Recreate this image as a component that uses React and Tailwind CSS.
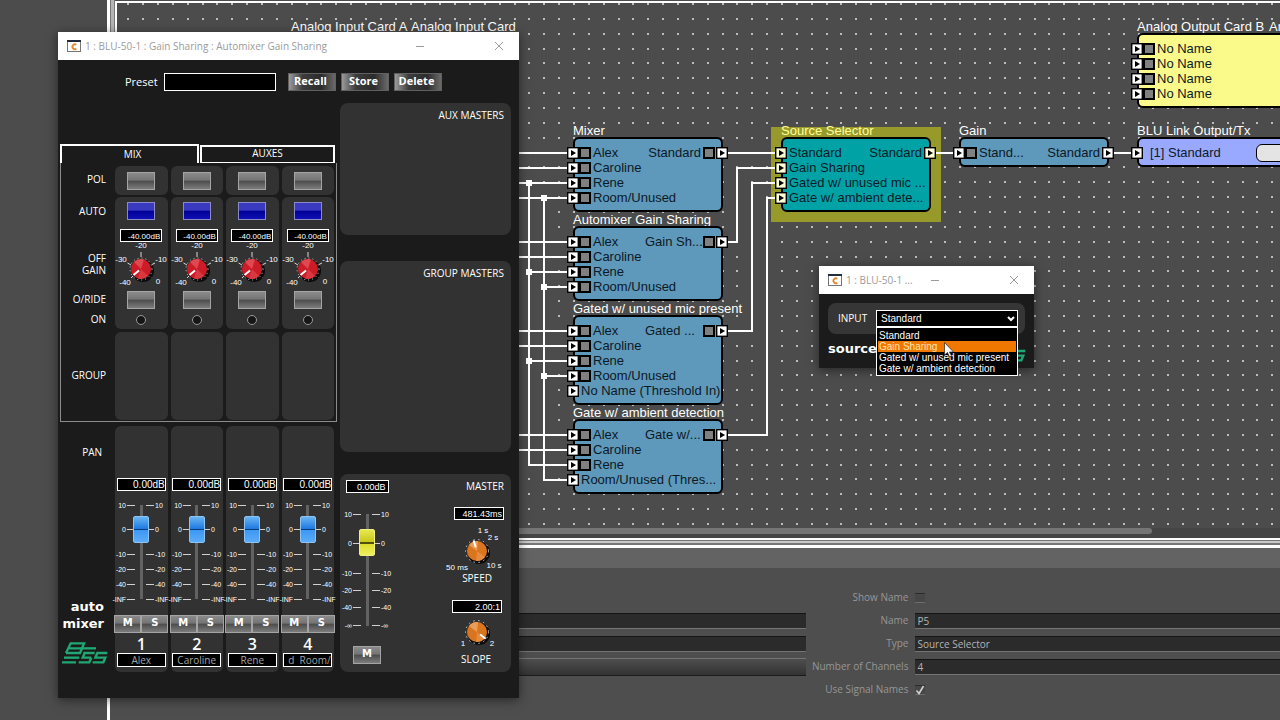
import { useState } from "react";

const channels = [
  { id: 1, name: "Alex" },
  { id: 2, name: "Caroline" },
  { id: 3, name: "Rene" },
  { id: 4, name: "d  Room/Unused" },
];

const mics = ["Alex", "Caroline", "Rene", "Room/Unused"];

// Positions are canvas coordinates of the node's title
const nodes = [
  { x: 456, y: 119, title: "Mixer", inputs: mics, output: "Standard", meters: 4, outMeter: true, color: "bg-[#5e98ba]" },
  { x: 456, y: 208, title: "Automixer Gain Sharing", inputs: mics, output: "Gain Sh...", meters: 4, outMeter: true, color: "bg-[#5e98ba]" },
  {
    x: 456,
    y: 297,
    title: "Gated w/ unused mic present",
    inputs: [...mics, "No Name (Threshold In)"],
    output: "Gated ...",
    meters: 4,
    outMeter: true,
    color: "bg-[#5e98ba]",
  },
  {
    x: 456,
    y: 401,
    title: "Gate w/ ambient detection",
    inputs: ["Alex", "Caroline", "Rene", "Room/Unused (Thres..."],
    output: "Gate w/...",
    meters: 3,
    outMeter: true,
    color: "bg-[#5e98ba]",
  },
  {
    x: 664,
    y: 119,
    title: "Source Selector",
    inputs: ["Standard", "Gain Sharing", "Gated w/ unused mic ...", "Gate w/ ambient dete..."],
    output: "Standard",
    meters: 0,
    selected: true,
    color: "bg-[#00a2a6]",
  },
  { x: 842, y: 119, title: "Gain", inputs: ["Stand..."], output: "Standard", meters: 1, color: "bg-[#5e98ba]" },
  { x: 1020, y: 119, title: "BLU Link Output/Tx", inputs: ["[1] Standard"], meters: 0, pill: true, color: "bg-[#99a9ff]" },
  {
    x: 1020,
    y: 15,
    title: "Analog Output Card B",
    inputs: ["No Name", "No Name", "No Name", "No Name"],
    meters: 4,
    color: "bg-[#fafa8b]",
  },
];

const looseTitles = [
  { x: 174, y: 15, title: "Analog Input Card A" },
  { x: 294, y: 15, title: "Analog Input Card" },
  { x: 1152, y: 15, title: "Analog Output Card C" },
];

const wires = [
  "M300 150H456", "M300 165H456", "M300 180H456", "M300 195H456",
  "M300 239H456", "M300 254H456", "M412 269H456", "M427 284H456",
  "M300 328H456", "M300 343H456", "M412 358H456", "M427 373H456",
  "M300 432H456", "M300 447H456",
  "M412 180V462H456", "M427 195V477H456",
  "M606 150H664",
  "M606 239H620V165H664",
  "M606 328H635V180H664",
  "M606 432H650V195H664",
  "M814 150H842", "M992 150H1020",
];

const junctions = [[412, 180], [427, 195], [412, 269], [427, 284], [412, 358], [427, 373]];

const gridSteps = [0, 15, 30, 45, 59, 74, 89];

const sources = ["Standard", "Gain Sharing", "Gated w/ unused mic present", "Gate w/ ambient detection"];

function Wiring() {
  return (
    <svg className="absolute inset-0 w-full h-full" aria-hidden="true">
      <defs>
        <pattern id="grid" x="40" y="0" width="104" height="104" patternUnits="userSpaceOnUse">
          {gridSteps.map((y) =>
            gridSteps.map((x) => <rect key={x + "-" + y} x={x} y={y} width="2" height="2" fill="#bcbcbc" />)
          )}
        </pattern>
      </defs>
      <rect width="100%" height="100%" fill="url(#grid)" />
      <rect x="654" y="124" width="170" height="95" fill="#98992b" />
      <g stroke="#fff" strokeWidth="2" fill="none">
        {wires.map((d) => (
          <path key={d} d={d} />
        ))}
      </g>
      {junctions.map(([x, y]) => (
        <rect key={x + "," + y} x={x - 3} y={y - 3} width="6" height="6" fill="#fff" />
      ))}
    </svg>
  );
}

function Port({ selected }) {
  return (
    <svg className="w-[12px] h-[12px] shrink-0" viewBox="0 0 12 12" aria-hidden="true">
      <rect x="0.7" y="0.7" width="10.6" height="10.6" fill={selected ? "#ffffd8" : "#fff"} stroke="#000" strokeWidth="1.4" />
      <path d="M4 3L9 6L4 9Z" fill="#000" />
    </svg>
  );
}

function Node({ node }) {
  return (
    <div className="absolute w-[150px]" style={{ left: node.x, top: node.y }}>
      <h3 className={`h-[15px] leading-[17px] whitespace-pre ${node.selected ? "text-[#ffff9a]" : "text-white"}`}>
        {node.title}
      </h3>
      <div className={`relative border-2 border-black rounded-md pt-[6px] pb-[5px] text-[#0c1a26] ${node.color}`}>
        <ul>
          {node.inputs.map((label, i) => (
            <li key={i} className="flex items-center h-[15px] -ml-[8px] -mr-[7px]">
              <Port selected={node.selected} />
              {i < node.meters && <span className="w-[12px] h-[12px] shrink-0 border-2 border-black bg-[#808080]" />}
              <span className={`whitespace-nowrap ${node.pill ? "ml-[7px]" : "ml-[2px]"}`}>{label}</span>
              {i === 0 && node.output && (
                <span className="ml-auto flex items-center">
                  <span className={node.output === "Standard" ? "mr-[2px]" : "w-[58px] whitespace-nowrap"}>
                    {node.output}
                  </span>
                  {node.outMeter && <span className="w-[12px] h-[12px] mr-[1px] border-2 border-black bg-[#808080]" />}
                  <Port selected={node.selected} />
                </span>
              )}
              {node.pill && <span className="ml-auto mr-[4px] w-[32px] h-[18px] shrink-0 rounded-md border border-black bg-[#e4e4e4]" />}
            </li>
          ))}
        </ul>
      </div>
    </div>
  );
}

function Canvas() {
  return (
    <section className="relative flex-1 min-h-0 overflow-hidden font-['Liberation_Sans',sans-serif] text-[13px]">
      <Wiring />
      {looseTitles.map((t) => (
        <h3
          key={t.x}
          className="absolute h-[15px] leading-[17px] whitespace-nowrap text-white"
          style={{ left: t.x, top: t.y }}
        >
          {t.title}
        </h3>
      ))}
      {nodes.map((n) => (
        <Node key={n.title} node={n} />
      ))}
    </section>
  );
}

function Field({ id, value }) {
  return (
    <input
      id={id}
      aria-label={id}
      defaultValue={value}
      className="w-full h-[16px] pl-[2px] bg-[#2b2b2b] border-t border-t-[#151515] border-b border-b-[#757575] text-[#b4b4b4] outline-none"
    />
  );
}

function Properties() {
  return (
    <section className="shrink-0 h-[172px] border-t-[20px] border-[#636363] bg-[#4e4e4e] pt-[18px] grid grid-cols-[25fr_17fr] font-['Open_Sans',sans-serif] text-[10px]">
      <div className="pt-[23px]">
        <div className="h-[23px] flex items-center"><Field id="Label" /></div>
        <div className="h-[23px] flex items-center"><Field id="Notes" /></div>
        <div className="h-[23px] flex items-center">
          <button
            aria-label="Preset style"
            className="w-full h-[18px] border-t border-t-[#757575] border-b border-b-[#1c1c1c] bg-linear-to-b from-[#4e4e4e] to-[#333333]"
          />
        </div>
      </div>
      <div className="text-[#969696]">
        <div className="h-[23px] flex items-center gap-[7px]">
          <label htmlFor="showName" className="w-[102px] text-right">Show Name</label>
          <input id="showName" type="checkbox" className="appearance-none w-[10px] h-[10px] border-t border-t-[#2c2c2c] border-b border-b-[#6c6c6c] bg-[#474747]" />
        </div>
        <div className="h-[23px] flex items-center gap-[7px]">
          <label htmlFor="name" className="w-[102px] shrink-0 text-right">Name</label>
          <Field id="name" value="P5" />
        </div>
        <div className="h-[23px] flex items-center gap-[7px]">
          <label htmlFor="type" className="w-[102px] shrink-0 text-right">Type</label>
          <Field id="type" value="Source Selector" />
        </div>
        <div className="h-[23px] flex items-center gap-[7px]">
          <label htmlFor="channels" className="w-[102px] shrink-0 text-right whitespace-nowrap">Number of Channels</label>
          <Field id="channels" value="4" />
        </div>
        <div className="h-[23px] flex items-center gap-[7px]">
          <label htmlFor="signalNames" className="w-[102px] text-right">Use Signal Names</label>
          <span className="grid place-items-center *:[grid-area:1/1]">
            <input
              id="signalNames"
              type="checkbox"
              defaultChecked
              className="appearance-none w-[10px] h-[10px] border-t border-t-[#2c2c2c] border-b border-b-[#6c6c6c] bg-[#474747]"
            />
            <svg className="w-[10px] h-[10px] pointer-events-none" viewBox="0 0 10 10" aria-hidden="true">
              <path d="M1.5 5.5L4 8.5L8.5 1" fill="none" stroke="#d0d0d0" strokeWidth="1.6" />
            </svg>
          </span>
        </div>
      </div>
    </section>
  );
}

function TitleBar({ title, controls }) {
  return (
    <header className="flex items-center h-[28px] pl-[9px] bg-white text-[#9b9b9b] font-['Open_Sans',sans-serif] text-[10px]">
      <svg className="w-[14px] h-[12px] mr-[4px] shrink-0" viewBox="0 0 14 12" aria-hidden="true">
        <rect x="0.5" y="0.5" width="13" height="11" fill="#fff" stroke="#777" />
        <rect width="14" height="2" fill="#222c3a" />
        <path d="M9.300 4.900A2.400 2.400 0 1 0 9.300 8.700" fill="none" stroke="#e08a2c" strokeWidth="1.800" />
      </svg>
      <h2 className="flex-1 whitespace-nowrap">{title}</h2>
      <div className={`flex ${controls}`}>
        <button aria-label="Minimize">
          <svg className="w-[10px] h-[10px]" viewBox="0 0 10 10"><path d="M1 5.500H9" stroke="#9b9b9b" /></svg>
        </button>
        <button aria-label="Close">
          <svg className="w-[10px] h-[10px]" viewBox="0 0 10 10"><path d="M1 1L9 9M9 1L1 9" stroke="#9b9b9b" /></svg>
        </button>
      </div>
    </header>
  );
}

function Logo() {
  return (
    <svg className="w-[46px] h-[22px]" viewBox="0 0 138 66" aria-hidden="true">
      <g fill="none" stroke="#1fa873" strokeWidth="7">
        <path d="M12 33L26 4H66L60 19H20" />
        <path d="M56 19H102" />
        <path d="M12 33H54L60 19" />
        <path d="M64 33H98M68 33L62 47H88" />
        <path d="M136 33H106L100 47H130L124 61H92" />
        <path d="M6 47H52" />
        <path d="M0 61H42M50 61H82L88 47" />
      </g>
    </svg>
  );
}

function Readout({ label, value, className = "text-[10px]" }) {
  return (
    <input
      aria-label={label}
      defaultValue={value}
      className={`h-[13px] border border-white bg-black text-white text-right leading-[11px] outline-none font-['Liberation_Sans',sans-serif] ${className}`}
    />
  );
}

function Pad({ label, on, children, className = "w-[28px]" }) {
  const tone = on
    ? "bg-[linear-gradient(#3a3ac0_0_45%,#000096_50%,#1010b4)] border-[#8a8ac8]"
    : "bg-[linear-gradient(#8a8a8a,#747474_45%,#4c4c4c_50%,#7c7c7c)] border-[#a4a4a4]";
  return (
    <button
      aria-label={label}
      className={`h-[18px] border ${tone} text-white text-[10px] leading-[12px] font-bold pb-[3px] font-['DejaVu_Sans',sans-serif] ${className}`}
    >
      {children}
    </button>
  );
}

function PresetButton({ children }) {
  return (
    <button className="w-[48px] h-[18px] pr-[3px] pb-[2px] border border-[#606060] bg-[linear-gradient(90deg,#9a9a9a,#3c3c3c_30%,#2c2c2c_70%,#6a6a6a)] text-white text-[11px] leading-[14px] font-bold">
      {children}
    </button>
  );
}

function GainKnob() {
  return (
    <svg className="w-[54px] h-[46px] overflow-visible" viewBox="0 0 54 46" role="img" aria-label="Off gain">
      <g stroke="#d8d8d8" strokeWidth="1">
        <path d="M17 36L19 34M13.500 21L17 23M27 10V15M37 23L41 21M36 34L38 36" />
      </g>
      <circle cx="29" cy="29" r="11" fill="#0c0c0c" />
      <circle cx="27" cy="27" r="11" fill="none" stroke="#c8c8c8" strokeDasharray="1 3" />
      <circle cx="27" cy="27" r="10" fill="#cc1c28" />
      <path d="M27 27L20 20A10 10 0 0 1 30 17.500Z" fill="#e04850" />
      <path d="M27 27L34 34A10 10 0 0 1 24 36.500Z" fill="#d83840" />
      <path d="M25 28.500L19.500 33" stroke="#fff" strokeWidth="2" />
      <g fill="#fff" fontSize="8" fontFamily="Liberation Sans, sans-serif" textAnchor="middle">
        <text x="27" y="6">-20</text>
        <text x="7" y="20">-30</text>
        <text x="47" y="20">-10</text>
        <text x="11" y="43">-40</text>
        <text x="44" y="42">0</text>
      </g>
    </svg>
  );
}

function OrangeKnob({ label, angle, marks }) {
  return (
    <svg className="w-[56px] h-[52px] overflow-visible" viewBox="0 0 56 52" role="img" aria-label={label}>
      <circle cx="31" cy="33" r="11" fill="#0c0c0c" />
      <circle cx="29" cy="31" r="11.500" fill="none" stroke="#c8c8c8" strokeDasharray="1.500 3.500" />
      <circle cx="29" cy="31" r="10" fill="#d9741f" />
      <path d="M29 31L21 25A10 10 0 0 1 30 21Z" fill="#eb9c56" />
      <path d="M29 31L37 37A10 10 0 0 1 28 41Z" fill="#e68a3c" />
      <path d="M29 27V20" stroke="#fff" strokeWidth="2" transform={`rotate(${angle} 29 31)`} />
      <g fill="#fff" fontSize="8" fontFamily="Liberation Sans, sans-serif" textAnchor="middle">
        {marks.map((m) => (
          <text key={m.text} x={m.x} y={m.y}>{m.text}</text>
        ))}
      </g>
    </svg>
  );
}

const channelTicks = [
  { y: 14, text: "10" },
  { y: 38, text: "0" },
  { y: 63, text: "-10" },
  { y: 78, text: "-20" },
  { y: 93, text: "-40" },
  { y: 108, text: "-INF" },
];

const masterTicks = [
  { y: 14, text: "10" },
  { y: 43, text: "0" },
  { y: 73, text: "-10" },
  { y: 90, text: "-20" },
  { y: 107, text: "-40" },
  { y: 125, text: "-∞" },
];

const thumbBase =
  "[&::-webkit-slider-runnable-track]:w-full [&::-webkit-slider-runnable-track]:h-full [&::-webkit-slider-thumb]:appearance-none [&::-webkit-slider-thumb]:w-[16px] [&::-webkit-slider-thumb]:h-[27px] [&::-webkit-slider-thumb]:rounded-xs [&::-webkit-slider-thumb]:border";
const thumbBlue =
  "[&::-webkit-slider-thumb]:border-[#8cc4f4] [&::-webkit-slider-thumb]:bg-[linear-gradient(#6ab4f4,#1c78e0_48%,#0c3c78_48%_54%,#3c98f4_54%,#5cacf8)]";
const thumbYellow =
  "[&::-webkit-slider-thumb]:border-[#f0f080] [&::-webkit-slider-thumb]:bg-[linear-gradient(#e8e850,#c8c81c_48%,#50500c_48%_54%,#dcdc28_54%,#f0f060)]";

function Fader({ label, ticks, value, size, thumb }) {
  return (
    <div className={`relative flex justify-center ${size}`}>
      <svg className="absolute top-0 w-[56px] h-full overflow-visible" aria-hidden="true">
        {ticks.map((t) => (
          <g key={t.text} fill="#fff" fontSize="7" fontFamily="Liberation Sans, sans-serif">
            <path d={`M14 ${t.y + 0.5}H22M33 ${t.y + 0.5}H41`} stroke="#d0d0d0" />
            <text x="13" y={t.y + 3} textAnchor="end">{t.text}</text>
            <text x="42" y={t.y + 3}>{t.text}</text>
          </g>
        ))}
      </svg>
      <input
        type="range"
        aria-label={label}
        defaultValue={value}
        className={`relative appearance-none w-[16px] h-full [writing-mode:vertical-lr] [direction:rtl] bg-[linear-gradient(#626262,#626262)] bg-no-repeat bg-center ${thumbBase} ${thumb}`}
      />
    </div>
  );
}

const caption = "text-[10px] leading-[12px] font-medium";

function MixStrips() {
  return (
    <div className="border border-[#8c8c8c] border-t-0 w-[277px] h-[259px] pt-[3px]">
      <div className="flex">
        <div className="w-[45px] h-[29px] text-right leading-[27px] text-[10px] font-medium">POL</div>
        <div className="ml-[9px] grid grid-cols-4 gap-[3px] w-[219px]">
          {channels.map((c) => (
            <div key={c.id} className="flex items-center justify-center rounded-md bg-[#323232]">
              <Pad label={`Polarity ${c.id}`} />
            </div>
          ))}
        </div>
      </div>
      <div className="flex mt-[2px]">
        <div className={`w-[45px] text-right flex flex-col ${caption}`}>
          <span className="mt-[8px]">AUTO</span>
          <span className="mt-[35px]">OFF</span>
          <span>GAIN</span>
          <span className="mt-[17px]">O/RIDE</span>
          <span className="mt-[8px]">ON</span>
        </div>
        <div className="ml-[9px] grid grid-cols-4 gap-[3px] w-[219px] h-[132px]">
          {channels.map((c) => (
            <div key={c.id} className="flex flex-col items-center rounded-md bg-[#323232] pt-[5px]">
              <Pad label={`Auto ${c.id}`} on />
              <Readout label={`Off gain ${c.id}`} value="-40.00dB" className="w-[42px] mt-[9px] pt-[2px] pr-[1px] text-[8px]" />
              <GainKnob />
              <div className="h-[3px]" />
              <Pad label={`Override ${c.id}`} />
              <span className="mt-[6px] w-[10px] h-[10px] rounded-full border border-[#999] bg-[#161616]" />
            </div>
          ))}
        </div>
      </div>
      <div className="flex mt-[3px]">
        <div className="w-[45px] h-[88px] text-right leading-[86px] text-[10px] font-medium">GROUP</div>
        <div className="ml-[9px] grid grid-cols-4 gap-[3px] w-[219px]">
          {channels.map((c) => (
            <div key={c.id} className="rounded-md bg-[#323232]" />
          ))}
        </div>
      </div>
    </div>
  );
}

function OutputStrips() {
  return (
    <div className="flex mt-[4px]">
      <div className="w-[52px] flex flex-col items-end">
        <span className={`mt-[20px] mr-[10px] ${caption}`}>PAN</span>
        <span className="mt-[140px] mr-[8px] font-bold text-[13px] leading-[17px] text-right font-['DejaVu_Sans',sans-serif]">
          auto
          <br />
          mixer
        </span>
        <div className="mt-[10px] mr-[4px]"><Logo /></div>
      </div>
      <div className="ml-[3px] grid grid-cols-4 gap-[3px] w-[219px] h-[246px]">
        {channels.map((c) => (
          <div key={c.id} className="flex flex-col items-center rounded-md bg-[#323232] pt-[52px]">
            <Readout label={`Gain ${c.id}`} value="0.00dB" className="w-[49px] text-[10px]" />
            <Fader
              label={`Fader ${c.id}`}
              ticks={channelTicks}
              value={74}
              size="w-full h-[122px]"
              thumb={`bg-[size:3px_94px] ${thumbBlue}`}
            />
            <div className="flex mt-[2px] -mx-[1px]">
              <Pad label={`Mute ${c.id}`} className="w-[27px]">M</Pad>
              <Pad label={`Solo ${c.id}`} className="w-[27px]">S</Pad>
            </div>
            <span className="text-[16px] leading-[22px] h-[20px] font-semibold">{c.id}</span>
            <input
              aria-label={`Channel ${c.id} name`}
              defaultValue={c.name}
              className={`w-[49px] h-[14px] border border-white bg-black text-[#a4a4a4] text-[10px] outline-none font-['Open_Sans',sans-serif] ${
                c.name.length > 10 ? "pl-[4px]" : "text-center"
              }`}
            />
          </div>
        ))}
      </div>
    </div>
  );
}

function Masters() {
  const card = "rounded-lg bg-[#323232] text-right pr-[7px] pt-[6px]";
  return (
    <div className="w-[171px] -mt-[41px] flex flex-col">
      <div className={`h-[132px] ${card} ${caption}`}>AUX MASTERS</div>
      <div className={`h-[191px] mt-[26px] ${card} ${caption}`}>GROUP MASTERS</div>
      <div className="h-[198px] mt-[22px] rounded-lg bg-[#323232] flex justify-between pl-[5px] pr-[7px] pt-[6px]">
        <div className="w-[44px] flex flex-col items-center">
          <Readout label="Master gain" value="0.00dB" className="w-[43px] pt-[1px] pr-[2px] text-[9px]" />
          <div className="h-[7px]" />
          <Fader
            label="Master fader"
            ticks={masterTicks}
            value={74}
            size="w-full h-[140px]"
            thumb={`bg-[size:3px_112px] ${thumbYellow}`}
          />
          <div className="h-[6px]" />
          <Pad label="Master mute">M</Pad>
        </div>
        <div className="flex flex-col items-end">
          <span className={caption}>MASTER</span>
          <Readout label="Speed" value="481.43ms" className="w-[50px] mt-[15px] pt-[1px] pr-[1px] text-[9px]" />
          <OrangeKnob
            label="Speed"
            angle={-18}
            marks={[
              { text: "1 s", x: 35, y: 13 },
              { text: "2 s", x: 45, y: 20 },
              { text: "50 ms", x: 9, y: 50 },
              { text: "10 s", x: 46, y: 48 },
            ]}
          />
          <span className={`mr-[12px] ${caption}`}>SPEED</span>
          <Readout label="Slope" value="2.00:1" className="w-[50px] mt-[16px] mr-[2px] pt-[1px] pr-[1px] text-[9px]" />
          <div className="-mt-[12px]">
            <OrangeKnob
              label="Slope"
              angle={128}
              marks={[
                { text: "1", x: 15, y: 45 },
                { text: "2", x: 44, y: 45 },
              ]}
            />
          </div>
          <span className={`mr-[13px] ${caption}`}>SLOPE</span>
        </div>
      </div>
    </div>
  );
}

function AutomixerWindow() {
  return (
    <div className="absolute left-[58px] top-[32px] w-[461px] bg-[#1b1b1b] text-white shadow-[0_2px_10px_rgba(0,0,0,0.5)] font-['Open_Sans',sans-serif]">
      <TitleBar title="1 : BLU-50-1 : Gain Sharing : Automixer Gain Sharing" controls="gap-[69px] mr-[15px]" />
      <div className="h-[638px] pl-[2px] pt-[13px]">
        <div className="flex items-center h-[18px] pl-[65px]">
          <label htmlFor="preset" className="w-[32px] text-[11px] font-medium">Preset</label>
          <input id="preset" className="ml-[7px] w-[112px] h-[18px] border border-white bg-black outline-none" />
          <div className="flex gap-[5px] ml-[12px]">
            <PresetButton>Recall</PresetButton>
            <PresetButton>Store</PresetButton>
            <PresetButton>Delete</PresetButton>
          </div>
        </div>
        <div className="flex gap-[3px] pt-[53px]">
          <div>
            <div className="flex items-end w-[277px]">
              <button className="w-[139px] h-[19px] pb-[2px] border-2 border-b-0 border-white text-[10px] leading-[14px] font-medium pr-[6px] pl-[12px]">
                MIX
              </button>
              <button className="flex-1 h-[18px] pb-[2px] ml-[1px] mr-[2px] border-2 border-b border-white text-[10px] leading-[13px] font-medium">
                AUXES
              </button>
            </div>
            <MixStrips />
            <OutputStrips />
          </div>
          <Masters />
        </div>
      </div>
    </div>
  );
}

function SourceWindow() {
  const [active] = useState("Gain Sharing");
  return (
    <div className="absolute left-[819px] top-[266px] w-[215px] bg-[#1b1b1b] text-white shadow-[0_2px_10px_rgba(0,0,0,0.5)] font-['Open_Sans',sans-serif]">
      <TitleBar title="1 : BLU-50-1 ..." controls="gap-[69px] mr-[15px]" />
      <div className="h-[74px] px-[9px] pt-[9px]">
        <div className="flex items-center h-[31px] pl-[10px] pr-[7px] rounded-lg bg-[#363636]">
          <label htmlFor="source" className="w-[38px] text-[10px] font-medium">INPUT</label>
          <div className="relative flex-1">
            <select
              id="source"
              defaultValue="Standard"
              className="block appearance-none w-full h-[17px] pl-[4px] border border-white bg-black text-[10px] outline-none font-['Liberation_Sans',sans-serif]"
            >
              {sources.map((s) => (
                <option key={s}>{s}</option>
              ))}
            </select>
            <svg className="absolute right-[3px] top-[6px] w-[8px] h-[6px] pointer-events-none" viewBox="0 0 8 6" aria-hidden="true">
              <path d="M1 1L4 4L7 1" fill="none" stroke="#fff" strokeWidth="2" />
            </svg>
            <ul className="absolute z-10 top-[17px] inset-x-0 pt-[2px] pb-[1px] px-[1px] border border-white bg-black text-[10px] leading-[11px] font-['Liberation_Sans',sans-serif]">
              {sources.map((s) => (
                <li key={s} className={`pl-[1px] whitespace-nowrap ${s === active ? "bg-[#f07800] text-[#ffe6b4]" : ""}`}>
                  {s}
                </li>
              ))}
            </ul>
            {/* Mouse pointer */}
            <svg className="absolute z-20 left-[68px] top-[32px] w-[10px] h-[16px]" viewBox="0 0 10 16" aria-hidden="true">
              <path d="M0.500 0.500V13L3.500 10.500L5.500 15L7.500 14L5.500 10H9.500Z" fill="#fff" stroke="#222" strokeWidth="0.700" />
            </svg>
          </div>
        </div>
        <div className="flex justify-between pt-[6px]">
          <span className="font-bold text-[13px] leading-[17px] font-['DejaVu_Sans',sans-serif]">source</span>
          <div className="-mr-[1px]"><Logo /></div>
        </div>
      </div>
    </div>
  );
}

export default function App() {
  return (
    <div className="relative h-screen overflow-hidden flex bg-[#4c4c4c]">
      <div className="w-[107px] shrink-0" />
      <main className="flex-1 min-w-0 flex flex-col border-l-[3px] border-white">
        <div className="flex flex-1 min-h-0">
          <div className="w-[5px] shrink-0 border-x border-x-[#777] bg-[#b4b4b4]" />
          <div className="flex-1 min-w-0 flex flex-col border-l-2 border-t-2 border-white mt-[1px]">
            <Canvas />
            <div className="h-[10px] shrink-0 bg-[#454545]">
              <div className="w-[89%] h-[6px] rounded-r bg-[#757575]" />
            </div>
          </div>
        </div>
        {/* Splitter */}
        <div className="h-[10px] shrink-0 bg-[#777] border-t-2 border-b-[3px] border-white flex flex-col pt-[1px]">
          <div className="h-[2px] bg-[#c8c8c8]" />
        </div>
        <Properties />
      </main>
      <SourceWindow />
      <AutomixerWindow />
    </div>
  );
}
